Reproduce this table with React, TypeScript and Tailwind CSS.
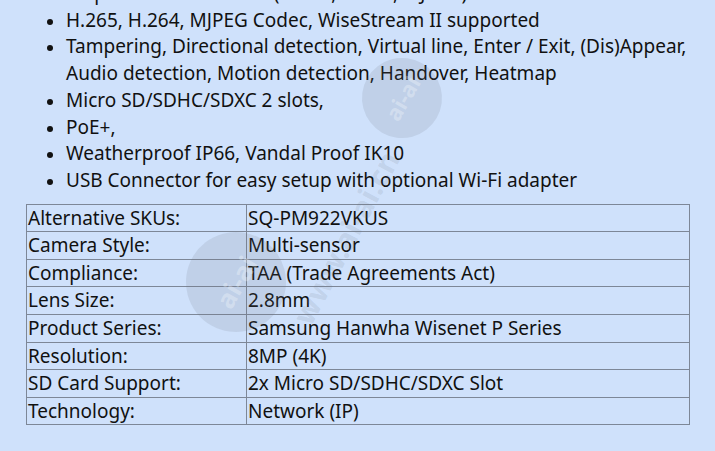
const features = [
  '30fps At all resolutions (H.265, H.264, MJPEG)',
  'H.265, H.264, MJPEG Codec, WiseStream II supported',
  'Tampering, Directional detection, Virtual line, Enter / Exit, (Dis)Appear, Audio detection, Motion detection, Handover, Heatmap',
  'Micro SD/SDHC/SDXC 2 slots,',
  'PoE+,',
  'Weatherproof IP66, Vandal Proof IK10',
  'USB Connector for easy setup with optional Wi-Fi adapter',
];

const specs: [string, string][] = [
  ['Alternative SKUs:', 'SQ-PM922VKUS'],
  ['Camera Style:', 'Multi-sensor'],
  ['Compliance:', 'TAA (Trade Agreements Act)'],
  ['Lens Size:', '2.8mm'],
  ['Product Series:', 'Samsung Hanwha Wisenet P Series'],
  ['Resolution:', '8MP (4K)'],
  ['SD Card Support:', '2x Micro SD/SDHC/SDXC Slot'],
  ['Technology:', 'Network (IP)'],
];

// faint site stamp lying over the content
function Watermark() {
  return (
    <div className="pointer-events-none absolute inset-0 overflow-hidden">
      <div className="absolute left-[362px] top-[58px] flex h-[80px] w-[80px] rotate-[-60deg] items-center justify-center rounded-full bg-gray-500/15 text-[22px] font-bold text-white/30">
        ai-ai
      </div>
      <div className="absolute left-[186px] top-[232px] flex h-[100px] w-[100px] rotate-[-60deg] items-center justify-center rounded-full bg-gray-500/15 text-[26px] font-bold text-white/30">
        ai-ai
      </div>
      <div className="absolute left-[250px] top-[215px] rotate-[-62deg] whitespace-nowrap text-[30px] font-bold text-gray-500/15">
        www.ai-ai.cn
      </div>
    </div>
  );
}

export default function App() {
  return (
    <div
      className="relative flex h-[451px] w-[715px] flex-col gap-[10px] overflow-hidden bg-[#cfe1fb] text-[#111]"
      style={{ fontFamily: '"Noto Sans", "Open Sans", sans-serif' }}
    >
      <ul className="mt-[-20px] flex flex-col pl-[47px] pr-[12px] text-[19px] leading-[26.7px]">
        {features.map((f) => (
          <li key={f} className="flex">
            <span className="mt-[12px] mr-[13px] h-[6px] w-[6px] shrink-0 rounded-full bg-[#111]" />
            <span>{f}</span>
          </li>
        ))}
      </ul>
      <table className="ml-[26px] w-[664px] border-collapse text-[19px] leading-[26.6px]">
        <tbody>
          {specs.map(([k, v]) => (
            <tr key={k}>
              <td className="w-[220px] border border-[#7d8797] px-[1px] py-0">{k}</td>
              <td className="border border-[#7d8797] px-[1px] py-0">{v}</td>
            </tr>
          ))}
        </tbody>
      </table>
      <Watermark />
    </div>
  );
}
